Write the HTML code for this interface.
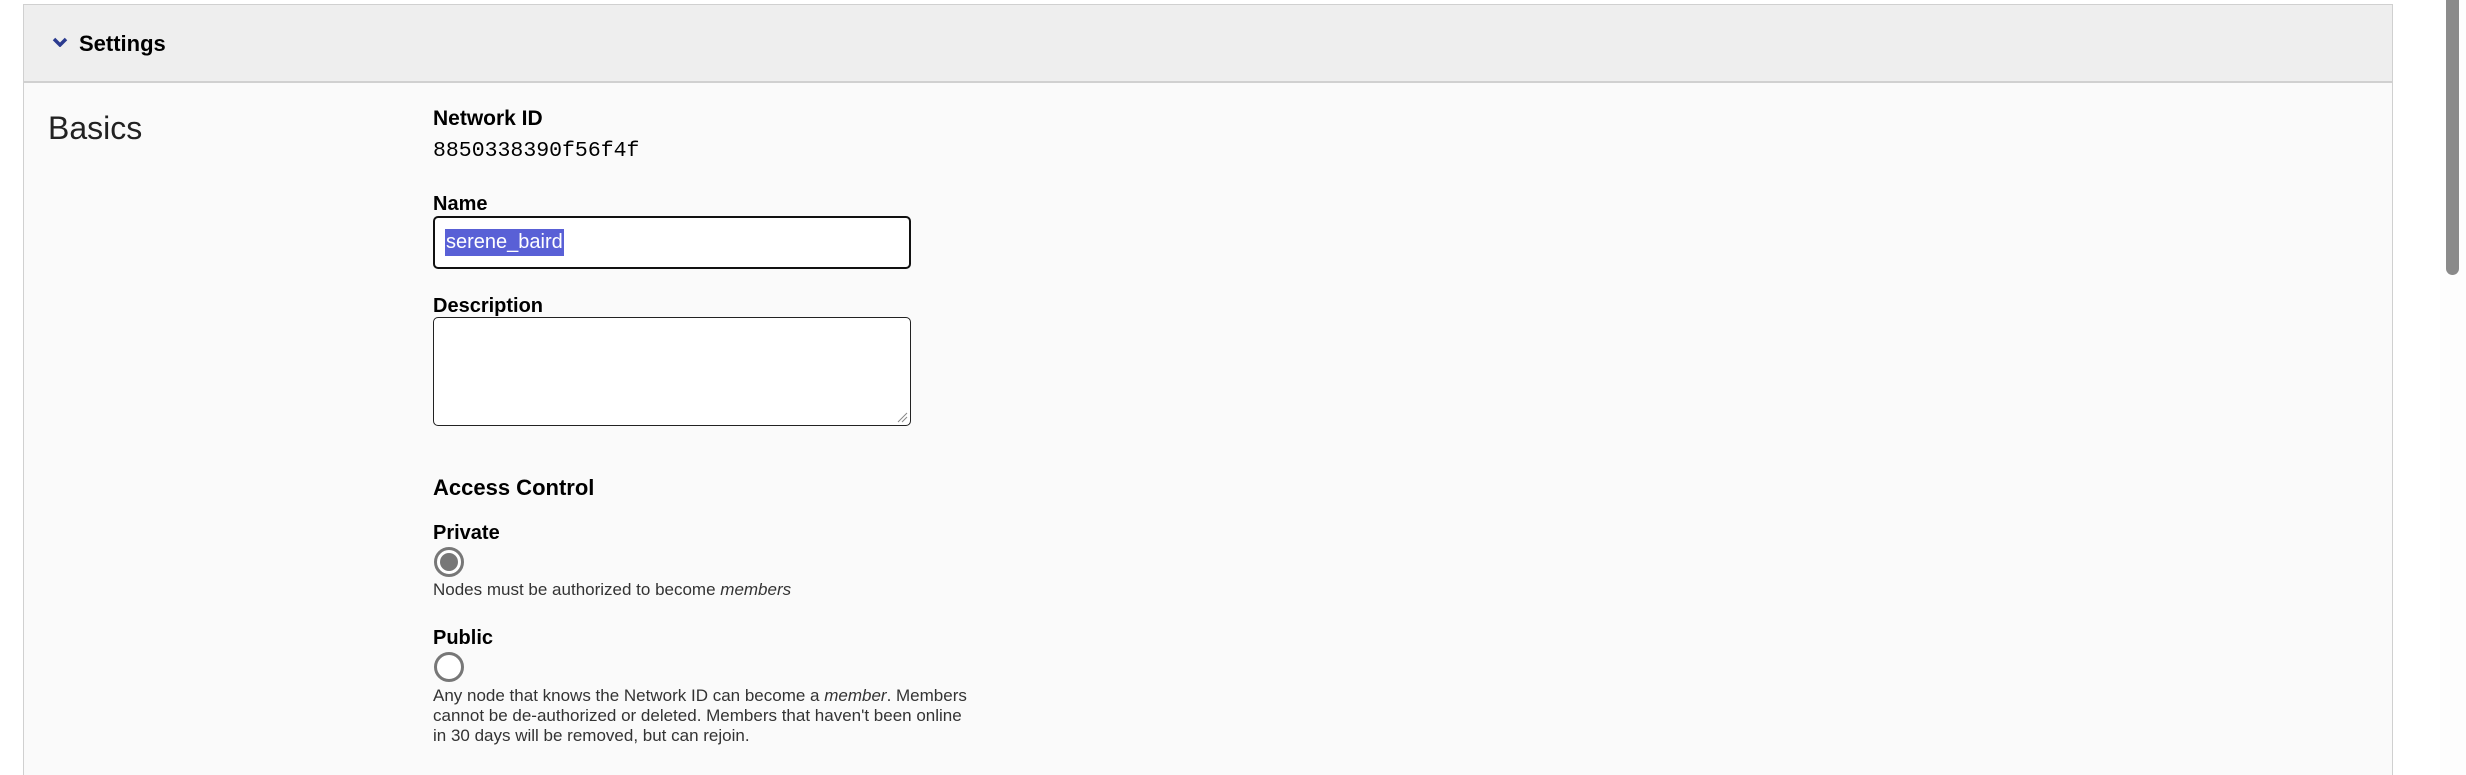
<!DOCTYPE html>
<html><head><meta charset="utf-8"><style>
html,body{margin:0;padding:0;background:#fff;width:2466px;height:775px;overflow:hidden;font-family:"Liberation Sans",sans-serif;color:#000}
.panel{position:absolute;left:23px;top:4px;width:2370px;height:771px;background:#fafafa;border:1px solid #d0d0d0;border-bottom:none;box-sizing:border-box}
.hdr{position:absolute;left:0;top:0;right:0;height:76px;background:#eeeeee;border-bottom:2px solid #d0d0d0}
.abs{position:absolute;white-space:nowrap}
.lbl{font-weight:bold;font-size:20px}
.small{font-size:17px;color:#333;line-height:20px}
.radio{position:absolute;width:24px;height:24px;border:3px solid #777;border-radius:50%;background:#fff}
.sb{position:absolute;left:2440px;top:0;width:26px;height:775px;background:#fdfdfd}
.thumb{position:absolute;left:2446px;top:0;width:13px;height:275px;background:#8a8a8a;border-radius:0 0 7px 7px}
</style></head><body>
<div class="panel"><div class="hdr"></div></div>
<svg class="abs" style="left:52px;top:37px" width="16" height="10" viewBox="0 0 16 10"><path d="M2 2 L8 8 L14 2" stroke="#2b3b8f" stroke-width="3.5" fill="none"/></svg>
<div class="abs" style="left:79px;top:31px;font-size:22px;font-weight:bold">Settings</div>
<div class="abs" style="left:48px;top:110px;font-size:32px;color:#222">Basics</div>
<div class="abs" style="left:433px;top:107px;font-size:21px;font-weight:bold">Network ID</div>
<div class="abs" style="left:433px;top:139px;font-family:'Liberation Mono',monospace;font-size:21.5px">8850338390f56f4f</div>
<div class="abs lbl" style="left:433px;top:193px">Name</div>
<div class="abs" style="left:433px;top:216px;width:478px;height:53px;border:2px solid #111;border-radius:5px;box-sizing:border-box;background:#fff"></div>
<div class="abs" style="left:445px;top:229px;height:27px;line-height:27px;background:#5960d6;color:#fff;font-size:20px;padding:0 1px">serene_baird</div>
<div class="abs lbl" style="left:433px;top:295px">Description</div>
<div class="abs" style="left:433px;top:317px;width:478px;height:109px;border:1px solid #222;border-radius:5px;box-sizing:border-box;background:#fff"></div>
<svg class="abs" style="left:896px;top:411px" width="12" height="12"><path d="M2 11 L11 2 M6 11 L11 6" stroke="#888" stroke-width="1"/></svg>
<div class="abs" style="left:433px;top:475px;font-size:22px;font-weight:bold">Access Control</div>
<div class="abs lbl" style="left:433px;top:522px">Private</div>
<div class="radio" style="left:434px;top:547px"></div>
<div class="abs" style="left:440px;top:553px;width:18px;height:18px;border-radius:50%;background:#777"></div>
<div class="abs small" style="left:433px;top:580px">Nodes must be authorized to become <i>members</i></div>
<div class="abs lbl" style="left:433px;top:627px">Public</div>
<div class="radio" style="left:434px;top:652px"></div>
<div class="abs small" style="left:433px;top:686px">Any node that knows the Network ID can become a <i>member</i>. Members<br>cannot be de-authorized or deleted. Members that haven't been online<br>in 30 days will be removed, but can rejoin.</div>
<div class="sb"></div><div class="thumb"></div>
</body></html>
